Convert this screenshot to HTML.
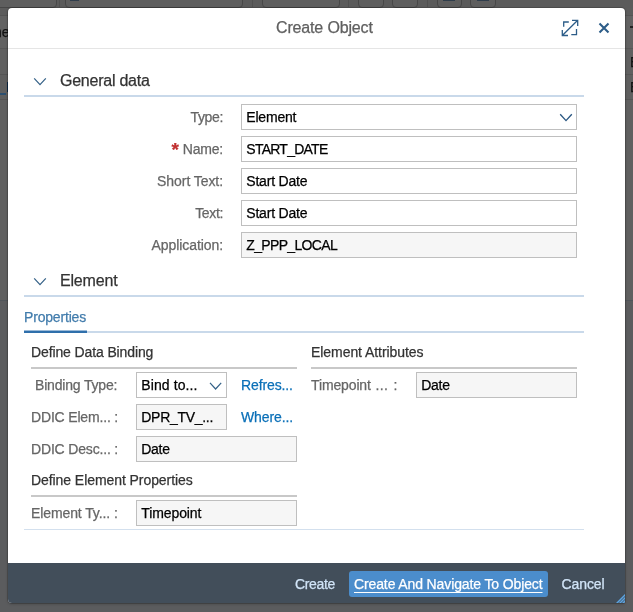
<!DOCTYPE html>
<html lang="en">
<head>
<meta charset="utf-8">
<title>Create Object</title>
<style>
html,body{margin:0;padding:0;}
body{width:633px;height:612px;overflow:hidden;position:relative;background:#5c5c5c;font-family:"Liberation Sans",sans-serif;font-size:14px;color:#333;-webkit-text-stroke:0.25px currentColor;}
.abs{position:absolute;}
.bg{position:absolute;left:0;top:0;width:633px;height:612px;overflow:hidden;}
.bg div{position:absolute;}
.tb{top:-5px;height:13px;border:1px solid #474747;border-radius:4px;background:#5e5e5e;box-sizing:border-box;}
.tsep{top:0;width:1px;height:7px;background:#505050;}
#dlg{position:absolute;left:8px;top:8px;width:617px;height:595px;background:#fff;border-radius:4px 4px 2px 4px;box-shadow:0 0 0 1px rgba(0,0,0,.15),0 1px 3px rgba(0,0,0,.25);overflow:hidden;}
#hdr{position:absolute;left:0;top:0;width:617px;height:40px;border-bottom:1px solid #e5e5e5;}
#title{position:absolute;left:276px;top:18px;height:20px;line-height:20px;font-size:16px;color:#606060;white-space:nowrap;letter-spacing:-0.155px;}
.sect{position:absolute;font-size:16px;color:#333;line-height:20px;height:20px;white-space:nowrap;}
.hline{position:absolute;height:2px;background:#c9d9ea;}
.lbl{position:absolute;width:200px;text-align:right;color:#666;line-height:20px;height:20px;white-space:nowrap;}
.lbl2{position:absolute;color:#666;line-height:20px;height:20px;white-space:nowrap;}
.inp{position:absolute;box-sizing:border-box;height:26px;border:1px solid #bfbfbf;background:#fff;line-height:24px;padding-left:4.3px;color:#000;white-space:nowrap;overflow:hidden;}
.ro{background:#f6f6f6;}
.grp{position:absolute;color:#333;line-height:20px;height:20px;white-space:nowrap;}
.gline{position:absolute;height:2px;background:#c8c8c8;}
.lnk{position:absolute;letter-spacing:-0.12px;color:#0b70b8;line-height:20px;height:20px;white-space:nowrap;}
#ftr{position:absolute;left:0;top:555px;width:617px;height:40px;background:#424e5a;}
.fbtn{position:absolute;color:#d1e4f7;line-height:20px;height:20px;white-space:nowrap;}
</style>
</head>
<body>
<div id="root" style="position:absolute;left:0;top:0;width:633px;height:612px;will-change:transform;">
<div class="bg">
  <div style="left:0;top:0;width:633px;height:8px;background:#5b5b5b;"></div>
  <div style="left:0;top:8px;width:633px;height:7px;background:#5c5c5c;"></div>
  <div style="left:0;top:15px;width:633px;height:1px;background:#545454;"></div>
  <div style="left:0;top:16px;width:633px;height:32px;background:#626262;"></div>
  <div style="left:0;top:48px;width:633px;height:1px;background:#575757;"></div>
  <div style="left:0;top:49px;width:633px;height:25px;background:#606060;"></div>
  <div style="left:0;top:74px;width:633px;height:1px;background:#555;"></div>
  <div style="left:0;top:75px;width:633px;height:24px;background:#5f5f5f;"></div>
  <div style="left:0;top:99px;width:633px;height:1px;background:#555;"></div>
  <div style="left:0;top:100px;width:633px;height:200px;background:#606060;"></div>
  <div style="left:0;top:300px;width:633px;height:1px;background:#50555a;"></div>
  <div style="left:0;top:301px;width:633px;height:311px;background:#5b5c5e;"></div>
  <div style="left:0;top:93px;width:6px;height:2px;background:#2b4f70;"></div>
  <div style="left:7px;top:82px;width:1px;height:10px;background:#0d2b4a;"></div>
  <div style="left:-6px;top:22px;font-size:14px;line-height:20px;color:#111;">ne</div>
  <div style="left:630px;top:26px;width:3px;height:2px;background:#222;"></div>
  <div style="left:630px;top:52px;font-size:14px;line-height:20px;color:#111;">E</div>
  <div style="left:630px;top:77px;font-size:14px;line-height:20px;color:#111;">E</div>
  <div class="tb" style="left:-10px;width:67px;"></div>
  <div class="tsep" style="left:59px;"></div>
  <div class="tb" style="left:65px;width:178px;"></div>
  <div class="tsep" style="left:252px;"></div>
  <div class="tb" style="left:262px;width:78px;"></div>
  <div class="tsep" style="left:348px;"></div>
  <div class="tb" style="left:358px;width:26px;"></div>
  <div class="tb" style="left:392px;width:26px;"></div>
  <div class="tsep" style="left:427px;"></div>
  <div class="tb" style="left:437px;width:25px;"></div>
  <div class="tb" style="left:470px;width:26px;"></div>
  <div style="left:443px;top:0;width:12px;height:1px;background:#2f3d4b;"></div>
  <div style="left:477px;top:0;width:12px;height:1px;background:#2f3d4b;"></div>
  <div style="left:70px;top:0;width:9px;height:1px;background:#2f3d4b;"></div>
</div>

<div id="dlg">
  <div id="hdr"></div>
  <div id="ftr"></div>
</div>
<div id="title">Create Object</div>

<!-- header icons -->
<svg class="abs" style="left:561px;top:19px" width="18" height="18" viewBox="0 0 18 18" fill="none" stroke="#2d5d88" stroke-width="1.3">
  <path d="M11 1.3H16.7V7 M1.3 11V16.5H7 M16.7 1.3L1.3 16.5"/>
  <path d="M2.7 7.7V3H7.8 M10.3 15.7H15.5V10.1"/>
</svg>
<svg class="abs" style="left:598px;top:22px" width="12" height="12" viewBox="0 0 12 12" fill="none" stroke="#2d5d88" stroke-width="2.1">
  <path d="M1.5 1.5L10.5 10.5M10.5 1.5L1.5 10.5"/>
</svg>

<!-- General data -->
<svg class="abs" style="left:33px;top:77px" width="14" height="9" viewBox="0 0 14 9" fill="none" stroke="#346187" stroke-width="1.2"><path d="M1.2 1.3L7 7.6L12.8 1.3"/></svg>
<div class="sect" style="left:60px;top:71px;letter-spacing:-0.24px;">General data</div>
<div class="hline" style="left:24px;top:95px;width:560px;"></div>

<div class="lbl" style="left:23px;top:107px;letter-spacing:-0.35px;">Type:</div>
<div class="inp" style="left:241px;top:104px;width:336px;letter-spacing:-0.2px;">Element</div>
<svg class="abs" style="left:558.5px;top:113px" width="14" height="9" viewBox="0 0 14 9" fill="none" stroke="#2a5782" stroke-width="1.35"><path d="M1.2 1.3L7 7.6L12.8 1.3"/></svg>

<div class="lbl" style="left:23px;top:139px;"><span class="abs" style="color:#c13030;font-weight:bold;font-size:19px;right:44px;top:1px;line-height:20px;">*</span><span style="letter-spacing:-0.2px">Name:</span></div>
<div class="inp" style="left:241px;top:136px;width:336px;letter-spacing:-0.75px;">START_DATE</div>

<div class="lbl" style="left:23px;top:171px;letter-spacing:-0.07px;">Short Text:</div>
<div class="inp" style="left:241px;top:168px;width:336px;letter-spacing:-0.2px;">Start Date</div>

<div class="lbl" style="left:23px;top:203px;letter-spacing:-0.35px;">Text:</div>
<div class="inp" style="left:241px;top:200px;width:336px;letter-spacing:-0.2px;">Start Date</div>

<div class="lbl" style="left:23px;top:235px;letter-spacing:-0.08px;">Application:</div>
<div class="inp ro" style="left:241px;top:232px;width:336px;letter-spacing:-0.66px;">Z_PPP_LOCAL</div>

<!-- Element -->
<svg class="abs" style="left:33px;top:277px" width="14" height="9" viewBox="0 0 14 9" fill="none" stroke="#346187" stroke-width="1.2"><path d="M1.2 1.3L7 7.6L12.8 1.3"/></svg>
<div class="sect" style="left:60px;top:271px;letter-spacing:-0.18px;">Element</div>
<div class="hline" style="left:24px;top:295px;width:560px;"></div>

<!-- tab -->
<div class="abs" style="left:24px;top:307px;line-height:20px;color:#427cac;white-space:nowrap;letter-spacing:-0.18px;">Properties</div>
<div class="abs" style="left:24px;top:331px;width:560px;height:2px;background:#c9d9ea;"></div>
<div class="abs" style="left:24px;top:330px;width:63px;height:1px;background:#9bbad8;"></div>
<div class="abs" style="left:24px;top:331px;width:63px;height:2px;background:#2f6fab;"></div>

<div class="grp" style="left:31px;top:342px;letter-spacing:-0.12px;">Define Data Binding</div>
<div class="gline" style="left:31px;top:367px;width:266px;"></div>
<div class="grp" style="left:311px;top:342px;letter-spacing:-0.06px;">Element Attributes</div>
<div class="gline" style="left:311px;top:367px;width:266px;"></div>

<div class="lbl2" style="left:35px;top:375px;letter-spacing:-0.18px;">Binding Type:</div>
<div class="inp" style="left:136px;top:372px;width:91px;letter-spacing:0.1px;">Bind to...</div>
<svg class="abs" style="left:209px;top:382px" width="13" height="8" viewBox="0 0 13 8" fill="none" stroke="#346187" stroke-width="1.2"><path d="M1 0.9L6.6 7L12.2 0.9"/></svg>
<div class="lnk" style="left:241px;top:375px;">Refres...</div>

<div class="lbl2" style="left:311px;top:375px;letter-spacing:-0.13px;">Timepoint<span style="letter-spacing:0.4px;margin-left:4.6px;">...</span><span class="abs" style="left:82.6px;top:0;">:</span></div>
<div class="inp ro" style="left:416px;top:372px;width:161px;letter-spacing:-0.3px;">Date</div>

<div class="lbl2" style="left:31px;top:407px;letter-spacing:-0.17px;">DDIC Elem... :</div>
<div class="inp ro" style="left:136px;top:404px;width:91px;letter-spacing:-0.3px;">DPR_TV_...</div>
<div class="lnk" style="left:241px;top:407px;">Where...</div>

<div class="lbl2" style="left:31px;top:439px;letter-spacing:-0.17px;">DDIC Desc... :</div>
<div class="inp ro" style="left:136px;top:436px;width:161px;letter-spacing:-0.3px;">Date</div>

<div class="grp" style="left:31px;top:470px;letter-spacing:-0.07px;">Define Element Properties</div>
<div class="gline" style="left:31px;top:495px;width:266px;"></div>

<div class="lbl2" style="left:31px;top:503px;letter-spacing:-0.1px;">Element Ty... :</div>
<div class="inp ro" style="left:136px;top:500px;width:161px;letter-spacing:-0.1px;">Timepoint</div>

<div class="abs" style="left:24px;top:529px;width:560px;height:1px;background:#d3e0ee;"></div>

<!-- footer -->
<div class="fbtn" style="left:295px;top:574px;letter-spacing:-0.35px;">Create</div>
<div class="abs" style="left:349px;top:571px;width:199px;height:26px;background:#4b8dcc;border-radius:3px;"></div>
<div class="fbtn" style="left:354px;top:574px;color:#fff;text-decoration:underline;text-decoration-skip-ink:none;text-underline-offset:2.5px;text-decoration-thickness:1.4px;letter-spacing:-0.12px;">Create And Navigate To Object</div>
<div class="fbtn" style="left:561.5px;top:574px;letter-spacing:-0.08px;">Cancel</div>
<svg class="abs" style="left:616px;top:594px" width="9" height="9" viewBox="0 0 9 9" stroke="#5ba4e2" stroke-width="1.5" fill="none"><path d="M0.5 9.5L9.5 0.5M3.5 9.5L9.5 3.5M6.5 9.5L9.5 6.5"/></svg>
</div>
</body>
</html>
